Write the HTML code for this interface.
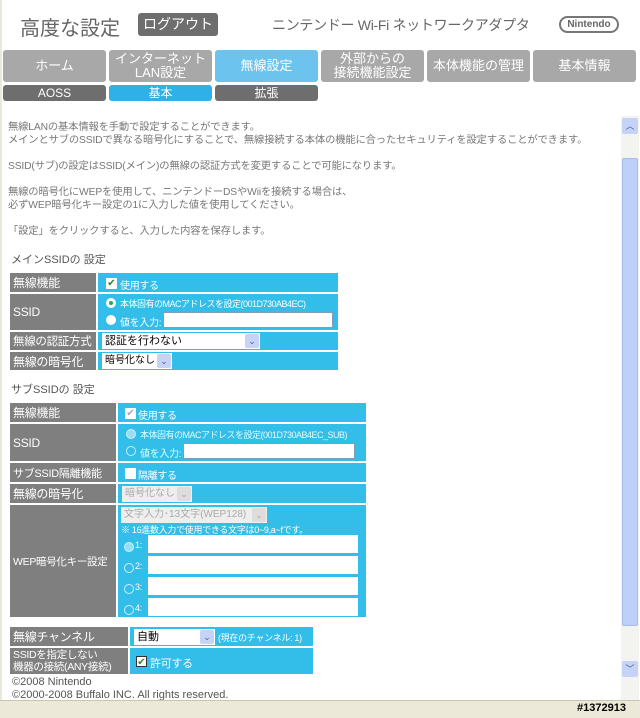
<!DOCTYPE html>
<html><head><meta charset="utf-8"><style>
*{margin:0;padding:0;box-sizing:border-box}
body{width:640px;height:718px;background:#fff;position:relative;overflow:hidden;font-family:"Liberation Sans","Noto Sans CJK JP",sans-serif;color:#555}
.a{position:absolute;white-space:nowrap}
.tab{position:absolute;top:50px;height:32px;background:#a8a8a8;border-radius:3px;color:#fff;font-size:13px;line-height:14px;display:flex;align-items:center;justify-content:center;text-align:center}
.st{position:absolute;top:85px;height:16px;background:#6e6e6e;border-radius:3px;color:#fff;font-size:12px;line-height:16px;text-align:center}
.txt{font-size:10.3px;color:#777;line-height:13px;letter-spacing:-0.15px}
.lab{position:absolute;background:#7f7f7f;color:#fff;font-size:12px;display:flex;align-items:center;padding-left:3px;white-space:nowrap;overflow:hidden;letter-spacing:-0.3px}
.val{position:absolute;background:#33bde9;color:#fff;font-size:11px;white-space:nowrap}
.val span{font-size:10px;letter-spacing:-0.3px}
.inp{position:absolute;background:#fff;border:1px solid #7f9db9;height:16px}
.sel{position:absolute;background:#fff;height:16px;font-size:11px;color:#000;padding-left:3px;line-height:16px;white-space:nowrap;overflow:hidden}
.sel i{position:absolute;right:1px;top:1px;width:14px;height:14px;background:#c4d3f7;border-radius:2px;font-style:normal;color:#4d6185;font-size:9px;text-align:center;line-height:14px}
.rad{position:absolute;width:10px;height:10px;border-radius:50%;background:#fff}
.cb{position:absolute;width:11px;height:11px;background:#fff;color:#2a8a2a;font-size:10px;line-height:11px;text-align:center}
</style></head><body>
<div class="a" style="left:0;top:0;width:2px;height:700px;background:#ece9d8"></div>
<div class="a" style="left:20px;top:12px;font-size:20px;color:#666">高度な設定</div>
<div class="a" style="left:138px;top:13px;width:80px;height:23px;background:#6e6e6e;border-radius:3px;color:#fff;font-size:14px;text-align:center;line-height:23px">ログアウト</div>
<div class="a" style="left:272px;top:15px;font-size:14px;color:#666;letter-spacing:-0.3px">ニンテンドー Wi-Fi ネットワークアダプタ</div>
<div class="a" style="left:559px;top:16px;width:60px;height:17px;border:2px solid #777;border-radius:9px;font-size:10px;font-weight:bold;color:#666;text-align:center;line-height:13px">Nintendo</div>
<div class="tab" style="left:3px;width:103px">ホーム</div>
<div class="tab" style="left:109px;width:103px">インターネット<br>LAN設定</div>
<div class="tab" style="left:215px;width:103px;background:#6cc3ee">無線設定</div>
<div class="tab" style="left:321px;width:103px">外部からの<br>接続機能設定</div>
<div class="tab" style="left:427px;width:103px">本体機能の管理</div>
<div class="tab" style="left:533px;width:103px">基本情報</div>
<div class="st" style="left:3px;width:103px">AOSS</div>
<div class="st" style="left:109px;width:103px;background:#2fb0e6">基本</div>
<div class="st" style="left:215px;width:103px">拡張</div>
<div class="a txt" style="left:8px;top:121px">無線LANの基本情報を手動で設定することができます。<br>メインとサブのSSIDで異なる暗号化にすることで、無線接続する本体の機能に合ったセキュリティを設定することができます。<br><br>SSID(サブ)の設定はSSID(メイン)の無線の認証方式を変更することで可能になります。<br><br>無線の暗号化にWEPを使用して、ニンテンドーDSやWiiを接続する場合は、<br>必ずWEP暗号化キー設定の1に入力した値を使用してください。<br><br>「設定」をクリックすると、入力した内容を保存します。</div>
<div class="a" style="left:11px;top:251px;font-size:11px;color:#555">メインSSIDの 設定</div>
<div class="lab" style="left:10px;top:273px;width:86px;height:19px">無線機能</div>
<div class="val" style="left:98px;top:273px;width:240px;height:19px"><div class="cb" style="left:8px;top:5px">✔</div><span class="a" style="left:22px;top:4px">使用する</span></div>
<div class="lab" style="left:10px;top:294px;width:86px;height:36px">SSID</div>
<div class="val" style="left:98px;top:294px;width:240px;height:36px"><div class="rad" style="left:8px;top:4px;border:3px solid #fff;background:#2a6"></div><span class="a" style="left:22px;top:3px;font-size:9px;letter-spacing:-0.5px">本体固有のMACアドレスを設定(001D730AB4EC)</span><div class="rad" style="left:8px;top:21px"></div><span class="a" style="left:22px;top:20px">値を入力:</span><div class="inp" style="left:65px;top:18px;width:170px"></div></div>
<div class="lab" style="left:10px;top:332px;width:86px;height:18px;font-size:11.5px">無線の認証方式</div>
<div class="val" style="left:98px;top:332px;width:240px;height:18px"><div class="sel" style="left:4px;top:1px;width:158px">認証を行わない<i>⌄</i></div></div>
<div class="lab" style="left:10px;top:352px;width:86px;height:18px">無線の暗号化</div>
<div class="val" style="left:98px;top:352px;width:240px;height:18px"><div class="sel" style="left:4px;top:1px;width:70px;font-size:10px">暗号化なし<i>⌄</i></div></div>
<div class="a" style="left:11px;top:381px;font-size:11px;color:#555">サブSSIDの 設定</div>
<div class="lab" style="left:10px;top:403px;width:106px;height:19px">無線機能</div>
<div class="val" style="left:118px;top:403px;width:248px;height:19px"><div class="cb" style="left:7px;top:5px;color:#aaa">✔</div><span class="a" style="left:20px;top:4px">使用する</span></div>
<div class="lab" style="left:10px;top:424px;width:106px;height:37px">SSID</div>
<div class="val" style="left:118px;top:424px;width:248px;height:37px;color:#dff"><div class="rad" style="left:8px;top:5px;background:#9cdcf3;border:1px solid #cef"></div><span class="a" style="left:22px;top:4px;font-size:9px;letter-spacing:-0.5px">本体固有のMACアドレスを設定(001D730AB4EC_SUB)</span><div class="rad" style="left:8px;top:22px;background:#33bde9;border:1px solid #cef"></div><span class="a" style="left:22px;top:21px">値を入力:</span><div class="inp" style="left:65px;top:19px;width:172px"></div></div>
<div class="lab" style="left:10px;top:463px;width:106px;height:19px;font-size:11px">サブSSID隔離機能</div>
<div class="val" style="left:118px;top:463px;width:248px;height:19px"><div class="cb" style="left:7px;top:5px"></div><span class="a" style="left:20px;top:4px">隔離する</span></div>
<div class="lab" style="left:10px;top:484px;width:106px;height:19px">無線の暗号化</div>
<div class="val" style="left:118px;top:484px;width:248px;height:19px"><div class="sel" style="left:4px;top:2px;width:70px;background:#eee;color:#aaa;font-size:10px">暗号化なし<i style="background:#ddd;color:#aaa">⌄</i></div></div>
<div class="lab" style="left:10px;top:505px;width:106px;height:112px;font-size:10.5px">WEP暗号化キー設定</div>
<div class="val" style="left:118px;top:505px;width:248px;height:112px"><div class="sel" style="left:3px;top:2px;width:146px;background:#eee;color:#aaa;font-size:10px">文字入力･13文字(WEP128)<i style="background:#ddd;color:#aaa">⌄</i></div><span class="a" style="left:3px;top:18px;font-size:9px">※ 16進数入力で使用できる文字は0~9,a~fです。</span>
<div class="rad" style="left:6px;top:37px;background:#9cdcf3;border:1px solid #cef"></div><span class="a" style="left:17px;top:35px;font-size:9px">1:</span><div class="inp" style="left:30px;top:30px;width:210px;height:18px;border:none"></div>
<div class="rad" style="left:6px;top:58px;background:#33bde9;border:1px solid #cef"></div><span class="a" style="left:17px;top:56px;font-size:9px">2:</span><div class="inp" style="left:30px;top:51px;width:210px;height:18px;border:none"></div>
<div class="rad" style="left:6px;top:79px;background:#33bde9;border:1px solid #cef"></div><span class="a" style="left:17px;top:77px;font-size:9px">3:</span><div class="inp" style="left:30px;top:72px;width:210px;height:18px;border:none"></div>
<div class="rad" style="left:6px;top:100px;background:#33bde9;border:1px solid #cef"></div><span class="a" style="left:17px;top:98px;font-size:9px">4:</span><div class="inp" style="left:30px;top:93px;width:210px;height:18px;border:none"></div></div>
<div class="lab" style="left:10px;top:627px;width:118px;height:19px">無線チャンネル</div>
<div class="val" style="left:130px;top:627px;width:183px;height:19px"><div class="sel" style="left:4px;top:2px;width:81px">自動<i>⌄</i></div><span class="a" style="left:88px;top:4px;font-size:9px">(現在のチャンネル: 1)</span></div>
<div class="lab" style="left:10px;top:648px;width:118px;height:26px;font-size:10.5px;line-height:12px;align-items:center">SSIDを指定しない<br>機器の接続(ANY接続)</div>
<div class="val" style="left:130px;top:648px;width:183px;height:26px"><div class="cb" style="left:6px;top:8px;border:1px solid #333">✔</div><span class="a" style="left:20px;top:7px;font-size:11px">許可する</span></div>
<div class="a" style="left:12px;top:676px;font-size:11px;color:#555;line-height:13px">©2008 Nintendo<br>©2000-2008 Buffalo INC. All rights reserved.</div>
<div class="a" style="left:621px;top:116px;width:18px;height:584px;background:#f3f3ef"></div>
<div class="a" style="left:622px;top:118px;width:16px;height:16px;background:#c4d3f7;border-radius:2px;color:#4d6185;font-size:9px;text-align:center;line-height:16px">︿</div>
<div class="a" style="left:622px;top:158px;width:16px;height:468px;background:#bcd0f8;border:1px solid #a5bbeb;border-radius:2px"></div>
<div class="a" style="left:622px;top:661px;width:16px;height:16px;background:#c4d3f7;border-radius:2px;color:#4d6185;font-size:9px;text-align:center;line-height:16px">﹀</div>
<div class="a" style="left:0;top:700px;width:640px;height:18px;background:#ece9d8;border-top:1px solid #c8c5b4"></div>
<div class="a" style="left:577px;top:702px;font-size:11px;font-weight:bold;color:#000">#1372913</div>
</body></html>
